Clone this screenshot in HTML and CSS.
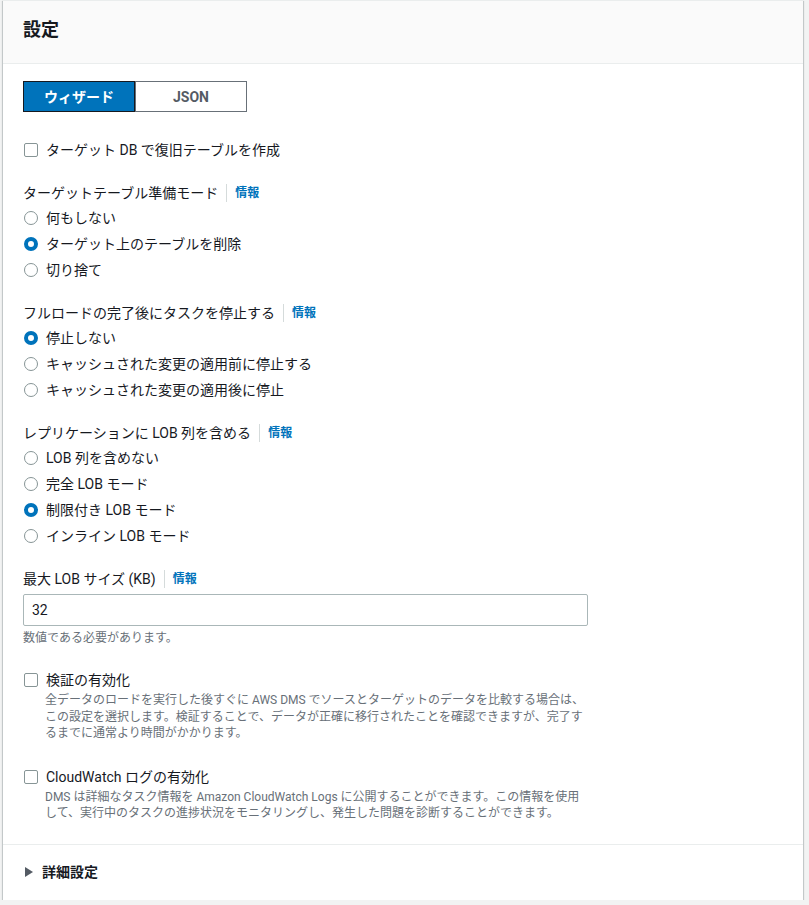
FILE: index.html
```html
<!DOCTYPE html>
<html lang="ja">
<head>
<meta charset="utf-8">
<title>設定</title>
<link rel="stylesheet" href="styles.css">
</head>
<body>
<div class="card">
  <div class="card-header"><h2 class="card-title">設定</h2></div>
  <div class="card-body">
    <div class="segmented">
      <span class="seg seg-active">ウィザード</span>
      <span class="seg">JSON</span>
    </div>

    <div class="check-row first-check"><span class="checkbox"></span><span>ターゲット DB で復旧テーブルを作成</span></div>

    <div class="group">
      <div class="group-label">ターゲットテーブル準備モード<span class="info">情報</span></div>
      <div class="radios">
        <div class="radio-row"><span class="radio"></span>何もしない</div>
        <div class="radio-row"><span class="radio radio-on"></span>ターゲット上のテーブルを削除</div>
        <div class="radio-row"><span class="radio"></span>切り捨て</div>
      </div>
    </div>

    <div class="group">
      <div class="group-label">フルロードの完了後にタスクを停止する<span class="info">情報</span></div>
      <div class="radios">
        <div class="radio-row"><span class="radio radio-on"></span>停止しない</div>
        <div class="radio-row"><span class="radio"></span>キャッシュされた変更の適用前に停止する</div>
        <div class="radio-row"><span class="radio"></span>キャッシュされた変更の適用後に停止</div>
      </div>
    </div>

    <div class="group">
      <div class="group-label">レプリケーションに LOB 列を含める<span class="info">情報</span></div>
      <div class="radios">
        <div class="radio-row"><span class="radio"></span>LOB 列を含めない</div>
        <div class="radio-row"><span class="radio"></span>完全 LOB モード</div>
        <div class="radio-row"><span class="radio radio-on"></span>制限付き LOB モード</div>
        <div class="radio-row"><span class="radio"></span>インライン LOB モード</div>
      </div>
    </div>

    <div class="group">
      <div class="group-label">最大 LOB サイズ (KB)<span class="info">情報</span></div>
      <div class="input">32</div>
      <div class="hint">数値である必要があります。</div>
    </div>

    <div class="check-block first-block">
      <div class="check-row"><span class="checkbox"></span><span>検証の有効化</span></div>
      <div class="desc">全データのロードを実行した後すぐに AWS DMS でソースとターゲットのデータを比較する場合は、この設定を選択します。検証することで、データが正確に移行されたことを確認できますが、完了するまでに通常より時間がかかります。</div>
    </div>

    <div class="check-block second-block">
      <div class="check-row"><span class="checkbox"></span><span>CloudWatch ログの有効化</span></div>
      <div class="desc">DMS は詳細なタスク情報を Amazon CloudWatch Logs に公開することができます。この情報を使用して、実行中のタスクの進捗状況をモニタリングし、発生した問題を診断することができます。</div>
    </div>
  </div>
  <div class="card-footer"><span class="caret"></span><span class="footer-label">詳細設定</span></div>
</div>
</body>
</html>
```

FILE: styles.css
```css
html, body {
  margin: 0;
  padding: 0;
  background: #f2f3f3;
}

body {
  font-family: Roboto, "Noto Sans CJK JP", sans-serif;
  font-size: 14px;
  line-height: 20px;
  color: #16191f;
}

.card {
  width: 800px;
  margin: 0 6px 0 3px;
  background: #ffffff;
  border-top: 1px solid #eaeded;
  box-shadow: 0 1px 1px 0 rgba(0, 28, 36, 0.3), 1px 1px 1px 0 rgba(0, 28, 36, 0.15), -1px 1px 1px 0 rgba(0, 28, 36, 0.15);
}

.card-header {
  background: #fafafa;
  padding: 18px 20px 22px;
  border-bottom: 1px solid #eaeded;
}

.card-title {
  margin: 0;
  font-size: 18px;
  line-height: 22px;
  font-weight: 700;
  color: #16191f;
}

.card-body {
  padding: 17px 20px 22px;
  display: flex;
  flex-direction: column;
  align-items: flex-start;
}

.segmented {
  display: flex;
  height: 31px;
}

.seg {
  box-sizing: border-box;
  width: 112px;
  height: 31px;
  display: flex;
  align-items: center;
  justify-content: center;
  font-weight: 700;
  font-size: 14px;
  color: #545b64;
  border: 1px solid #687078;
  background: #ffffff;
}

.seg-active {
  background: #0073bb;
  color: #ffffff;
  border-color: #16191f;
}

.check-row {
  display: flex;
  align-items: center;
  height: 20px;
}

.first-check {
  margin-top: 28px;
}

.checkbox {
  box-sizing: border-box;
  width: 14px;
  height: 14px;
  border: 1.5px solid #879596;
  border-radius: 2px;
  margin: 0 8px 0 1px;
  flex: none;
}

.group {
  margin-top: 23px;
  width: 565px;
}

.group:first-of-type {
  margin-top: 22px;
}

.group-label {
  display: flex;
  align-items: center;
  height: 20px;
}

.info {
  font-size: 12px;
  font-weight: 700;
  color: #0073bb;
  margin-left: 8px;
  padding-left: 8px;
  border-left: 1px solid #d5dbdb;
  line-height: 18px;
}

.radios {
  margin-top: 5px;
  display: flex;
  flex-direction: column;
  gap: 6px;
}

.radio-row {
  display: flex;
  align-items: center;
  height: 20px;
}

.radio {
  box-sizing: border-box;
  width: 14px;
  height: 14px;
  border-radius: 50%;
  border: 1.5px solid #879596;
  background: #ffffff;
  margin: 0 8px 0 1px;
  flex: none;
}

.radio-on {
  border: 4px solid #0073bb;
}

.input {
  box-sizing: border-box;
  margin-top: 5px;
  width: 565px;
  height: 32px;
  border: 1px solid #aab7b8;
  border-radius: 2px;
  padding: 5px 8px;
  line-height: 20px;
  color: #16191f;
}

.hint {
  margin-top: 4px;
  font-size: 12px;
  line-height: 16px;
  color: #687078;
}

.check-block {
  width: 565px;
}

.first-block {
  margin-top: 24px;
}

.second-block {
  margin-top: 25px;
}

.desc {
  margin: 2px 0 0 22px;
  width: 543px;
  font-size: 12px;
  line-height: 16.5px;
  color: #687078;
}

.card-footer {
  border-top: 1px solid #eaeded;
  padding: 17px 20px 18px 22px;
  display: flex;
  align-items: center;
  height: 20px;
}

.caret {
  width: 0;
  height: 0;
  border-top: 5px solid transparent;
  border-bottom: 5px solid transparent;
  border-left: 8px solid #545b64;
  margin-right: 9px;
}

.footer-label {
  font-weight: 700;
  color: #16191f;
}
```
